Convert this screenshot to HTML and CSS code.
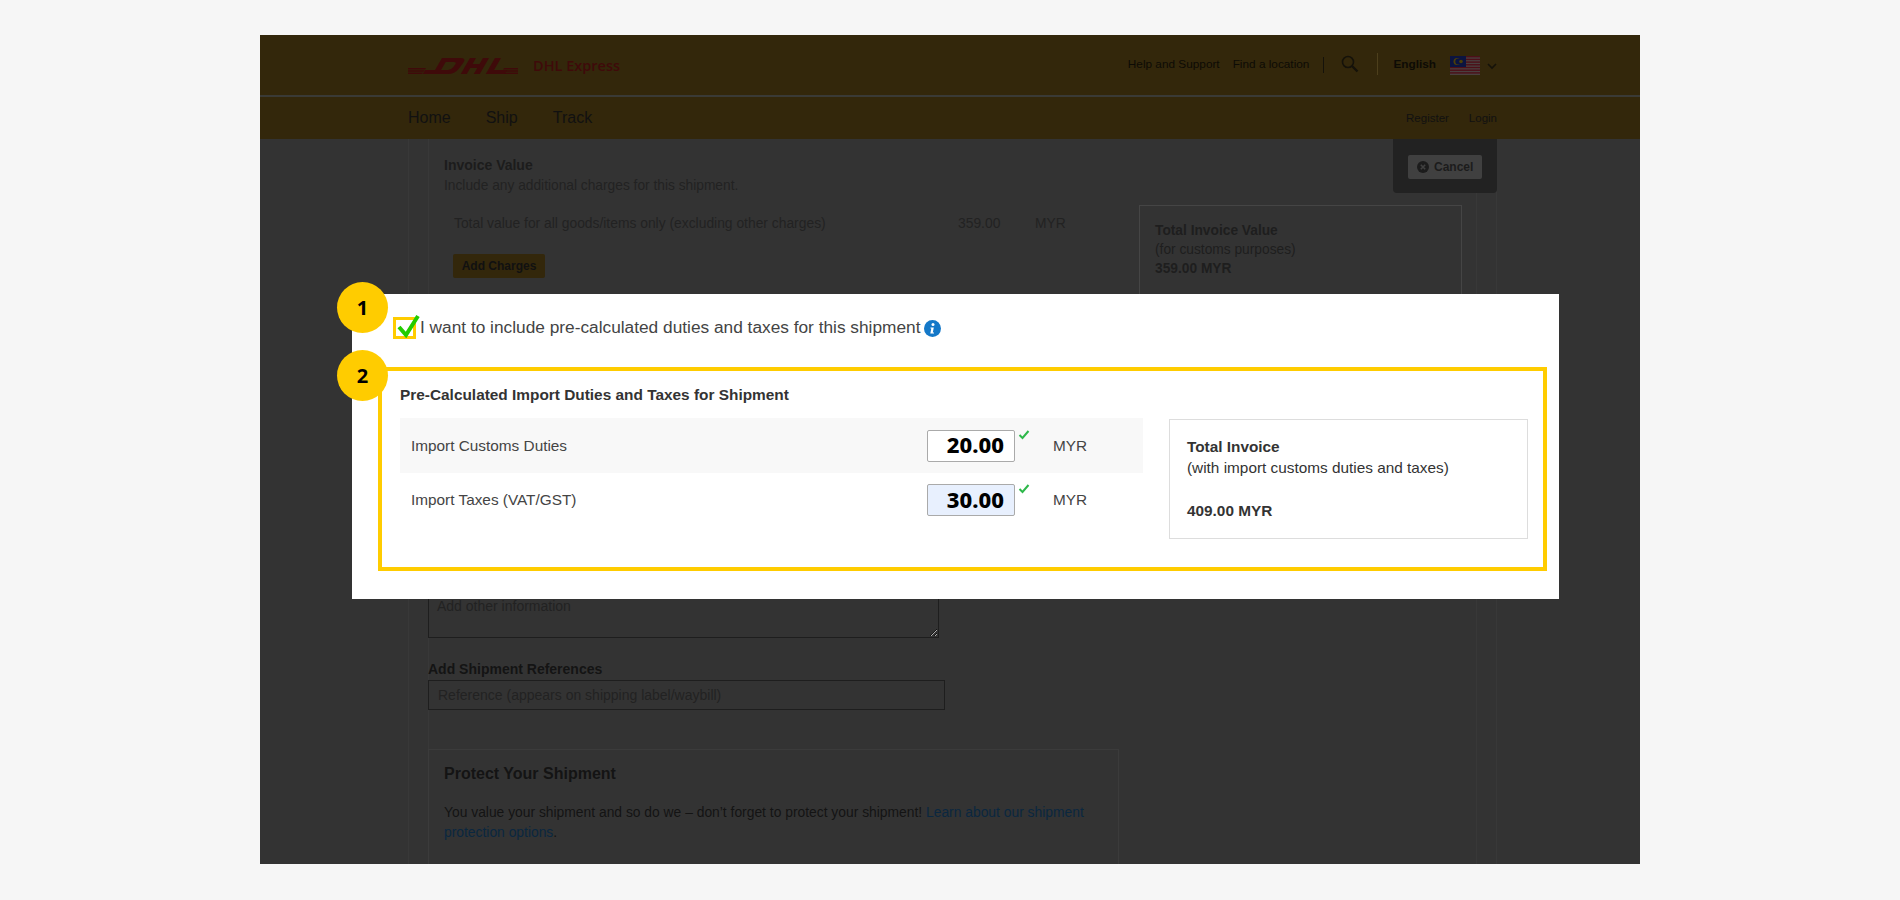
FILE: index.html
```html
<!DOCTYPE html>
<html lang="en">
<head>
<meta charset="utf-8">
<title>DHL Express - Duties and Taxes</title>
<link rel="stylesheet" href="styles.css">
</head>
<body>
<div class="frame">
  <header class="top">
    <div class="brand">
      <svg class="logo" width="110" height="18" viewBox="0 0 110 18">
        <g fill="#3f0a0a">
          <path d="M0 11H18L17 12.500H0ZM0 13.200H16.500L15.500 14.700H0ZM0 15.400H15L14 17H0Z"/>
          <path d="M96 11H110V12.500H95ZM94.500 13.200H110V14.700H93.500ZM93 15.400H110V17H92Z"/>
          <g transform="translate(0,1) skewX(-30)">
            <path fill-rule="evenodd" d="M34 0H52Q59 0 58 5L57 11Q56 16 49 16H24V12H34Z M40 4V12H47Q50 12 50.500 9L51 6Q51 4 48 4Z"/>
            <path d="M62 0H68V6H75V0H81V16H75V10H68V16H62Z"/>
            <path d="M87 0H93V12H106V16H87Z"/>
          </g>
        </g>
      </svg>
      <span class="brand-name">DHL Express</span>
    </div>
    <nav class="utility">
      <a class="util-link">Help and Support</a>
      <a class="util-link">Find a location</a>
      <span class="sep sep-a"></span>
      <svg class="search" width="18" height="18" viewBox="0 0 18 18"><circle cx="7" cy="7" r="5.500" fill="none" stroke="#15120a" stroke-width="1.600"/><path d="M11 11l5.500 5.500" stroke="#15120a" stroke-width="2.400"/></svg>
      <span class="sep sep-b"></span>
      <strong class="lang">English</strong>
      <svg class="flag" width="30" height="19" viewBox="0 0 30 19">
        <rect width="30" height="19" fill="#4a4040"/>
        <g fill="#4d0f18"><rect y="0" width="30" height="1.400"/><rect y="2.700" width="30" height="1.400"/><rect y="5.400" width="30" height="1.400"/><rect y="8.100" width="30" height="1.400"/><rect y="10.800" width="30" height="1.400"/><rect y="13.500" width="30" height="1.400"/><rect y="16.200" width="30" height="1.400"/></g>
        <rect width="16" height="11" fill="#0c1440"/>
        <circle cx="7" cy="5.500" r="3.500" fill="#4d3f08"/><circle cx="8.300" cy="5.500" r="3" fill="#0c1440"/><circle cx="11" cy="5.500" r="1.800" fill="#4d3f08"/>
      </svg>
      <svg class="chev" width="10" height="7" viewBox="0 0 10 7"><path d="M1 1l4 4 4-4" fill="none" stroke="#15120a" stroke-width="1.600"/></svg>
    </nav>
  </header>
  <div class="nav">
    <div class="nav-main"><a>Home</a><a>Ship</a><a>Track</a></div>
    <div class="nav-side"><a>Register</a><a>Login</a></div>
  </div>
  <main class="content">
    <div class="outer">
      <div class="card">
        <section class="invoice">
          <div class="invoice-left">
            <h3 class="inv-title">Invoice Value</h3>
            <p class="inv-sub">Include any additional charges for this shipment.</p>
            <div class="inv-row"><span class="inv-label">Total value for all goods/items only (excluding other charges)</span><span class="inv-val">359.00</span><span class="inv-cur">MYR</span></div>
            <button class="add">Add Charges</button>
          </div>
          <div class="inv-total"><b>Total Invoice Value</b><span>(for customs purposes)</span><b>359.00 MYR</b></div>
        </section>
        <section class="other">
          <textarea class="other-text" placeholder="Add other information"></textarea>
          <label class="ref-label">Add Shipment References</label>
          <input class="ref-input" type="text" placeholder="Reference (appears on shipping label/waybill)">
        </section>
        <section class="protect">
          <h2>Protect Your Shipment</h2>
          <p>You value your shipment and so do we – don’t forget to protect your shipment! <a>Learn about our shipment protection options</a>.</p>
        </section>
      </div>
    </div>
  </main>

  <div class="cancel-tab"><button class="cancel"><svg width="12" height="12" viewBox="0 0 12 12"><circle cx="6" cy="6" r="6" fill="#1c1c1c"/><path d="M3.800 3.800l4.400 4.400M8.200 3.800l-4.400 4.400" stroke="#404040" stroke-width="1.600"/></svg>Cancel</button></div>

  <section class="panel">
    <div class="consent">
      <span class="checkbox"><svg class="tick" width="24" height="24" viewBox="0 0 24 24"><path d="M3 13l7 8L22 2" fill="none" stroke="#22cc00" stroke-width="4"/></svg></span>
      <span class="consent-text">I want to include pre-calculated duties and taxes for this shipment</span>
      <svg class="info" width="17" height="17" viewBox="0 0 17 17"><circle cx="8.500" cy="8.500" r="8.500" fill="#1478c8"/><circle cx="9" cy="4.500" r="1.500" fill="#fff"/><path d="M6.500 7.500h3.300l-1 5h1.200v1H6.300l1-5H6.500z" fill="#fff"/></svg>
    </div>
    <div class="highlight">
      <h3 class="duty-title">Pre-Calculated Import Duties and Taxes for Shipment</h3>
      <div class="duty-grid">
        <div class="duty-rows">
          <div class="duty-row shaded">
            <span class="duty-label">Import Customs Duties</span>
            <input class="amount" type="text" value="20.00">
            <svg class="ok" width="12" height="10" viewBox="0 0 12 10"><path d="M1.500 5l3 3 6-7" fill="none" stroke="#2eb84a" stroke-width="2"/></svg>
            <span class="cur">MYR</span>
          </div>
          <div class="duty-row">
            <span class="duty-label">Import Taxes (VAT/GST)</span>
            <input class="amount filled" type="text" value="30.00">
            <svg class="ok" width="12" height="10" viewBox="0 0 12 10"><path d="M1.500 5l3 3 6-7" fill="none" stroke="#2eb84a" stroke-width="2"/></svg>
            <span class="cur">MYR</span>
          </div>
        </div>
        <aside class="total">
          <b>Total Invoice</b>
          <span>(with import customs duties and taxes)</span>
          <b class="total-sum">409.00 MYR</b>
        </aside>
      </div>
    </div>
  </section>
  <span class="badge badge-one">1</span>
  <span class="badge badge-two">2</span>
</div>
</body>
</html>
```
FILE: styles.css
```css
* { box-sizing: border-box; }
html, body { margin: 0; height: 100%; overflow: hidden; }
body { background: #f6f6f6; padding-top: 35px; font-family: "Liberation Sans", Arial, sans-serif; color: #222; }
.frame { position: relative; width: 1380px; height: 829px; margin: 0 auto 0 260px; overflow: hidden; background: #333; }

.top { height: 60px; background: #33270b; display: flex; justify-content: space-between; align-items: center; padding: 0 143px 0 148px; }
.brand { display: flex; align-items: center; gap: 15px; margin-top: 1px; }
.logo { display: block; }
.brand-name { font-family: "Open Sans", sans-serif; font-weight: 600; font-size: 14.5px; color: #3f0a0a; white-space: nowrap; }
.utility { display: flex; align-items: center; font-size: 11.8px; color: #0d0b05; margin-top: -3px; }
.util-link { margin-right: 13px; }
.util-link + .util-link { margin-right: 14px; }
.sep { width: 1px; height: 16px; background: #15120a; }
.sep-a { margin: 2px 17px 0 0; }
.search { margin-right: 18px; }
.sep-b { height: 22px; background: #4d3f1c; margin-right: 15px; }
.lang { margin-right: 14px; font-size: 11.8px; }
.flag { margin-right: 7px; margin-top: 4px; }
.chev { margin-top: 6px; }

.nav { height: 44px; background: #33270b; border-top: 2px solid #3a3a36; display: flex; justify-content: space-between; align-items: center; padding: 0 143px 0 148px; color: #111; }
.nav-main { display: flex; gap: 35px; font-size: 16px; }
.nav-side { display: flex; gap: 20px; font-size: 11.5px; }

.content { height: 725px; background: #333; padding: 0 143px 0 148px; overflow: hidden; }
.outer { height: 100%; padding: 0 19px; border-left: 1px solid #383838; border-right: 1px solid #383838; }
.card { height: 100%; box-shadow: inset 1px 0 #383838, inset -1px 0 #383838; padding: 17px 0 0 0; }

.invoice { display: flex; height: 380px; padding-left: 16px; }
.invoice-left { width: 695px; }
.inv-title { margin: 0; font-size: 14px; line-height: 19px; color: #1c1c1c; }
.inv-sub { margin: 0 0 13px; font-size: 13.75px; line-height: 19px; color: #222; position: relative; top: 1px; }
.inv-row { display: flex; align-items: center; height: 32px; padding-left: 10px; font-size: 13.85px; color: #222; }
.inv-label { width: 504px; }
.inv-val { width: 77px; }
.inv-cur { width: 40px; }
.add { display: block; margin: 15px 0 0 9px; width: 92px; height: 24px; border: 0; border-radius: 2px; background: #33270b; font: bold 12px "Liberation Sans", Arial, sans-serif; color: #111; padding: 0; }
.inv-total { width: 323px; height: 200px; margin: 49px 0 0 0; border: 1px solid #454545; padding: 15px 15px; display: flex; flex-direction: column; font-size: 13.75px; line-height: 19px; color: #1e1e1e; }

.other { display: flex; flex-direction: column; align-items: flex-start; }
.other-text { width: 511px; height: 41px; margin-top: 61px; background: transparent; border: 1px solid #1e1e1e; border-top: 0; padding: 1px 8px; font: 14px "Liberation Sans", Arial, sans-serif; outline: 0; }
.other-text::placeholder, .ref-input::placeholder { color: #222; }
.ref-label { margin: 23px 0 2px; font-weight: bold; font-size: 14px; line-height: 17px; color: #141414; }
.ref-input { width: 517px; height: 30px; background: transparent; border: 1px solid #1e1e1e; padding: 0 9px; font: 14px "Liberation Sans", Arial, sans-serif; outline: 0; }

.protect { width: 691px; height: 200px; margin-top: 39px; border: 1px solid #3b3b3b; padding: 14px 15px; color: #141414; }
.protect h2 { margin: 0 0 19px; font-size: 16px; line-height: 20px; color: #141414; }
.protect p { margin: 0; font-size: 13.85px; line-height: 19.500px; }
.protect a { color: #0a2740; }

.cancel-tab { position: absolute; left: 1133px; top: 104px; width: 104px; height: 54px; background: #222; border-radius: 0 0 4px 4px; padding: 16px 0 0 15px; }
.cancel { display: flex; align-items: center; gap: 5px; width: 74px; height: 24px; padding: 0 0 0 9px; border: 0; border-radius: 2px; background: #404040; font: bold 12px "Liberation Sans", Arial, sans-serif; color: #1c1c1c; }

.panel { position: absolute; left: 92px; top: 259px; width: 1207px; height: 305px; background: #fff; padding: 23px 0 0 26px; }
.consent { display: flex; align-items: center; height: 22px; font-size: 17.3px; color: #444; margin-left: 15px; }
.checkbox { position: relative; width: 23px; height: 22px; border: 3px solid #ffcc00; flex: none; background: #fff; margin-right: 4px; }
.tick { position: absolute; left: 0; top: -6px; }
.consent-text { margin: -2px 4px 0 0; white-space: nowrap; }
.highlight { width: 1169px; height: 204px; margin-top: 28px; border: 4px solid #ffcc00; padding: 14px 15px 0 18px; }
.duty-title { margin: 0 0 13px; font-size: 15.4px; line-height: 20px; color: #333; white-space: nowrap; }
.duty-grid { display: flex; justify-content: space-between; align-items: flex-start; }
.duty-rows { width: 743px; }
.duty-row { display: flex; align-items: center; height: 54px; padding: 0 54px 0 11px; font-size: 15.35px; color: #444; }
.duty-row.shaded { height: 55px; background: #f8f8f8; }
.duty-label { flex: 1; }
.amount { width: 88px; height: 32px; padding: 0 10px 3px 0; border: 1px solid #aaa; border-radius: 2px; background: #fff; text-align: right; font: 800 22px "Noto Sans", sans-serif; color: #000; outline: 0; }
.amount.filled { background: #e8f0fe; }
.ok { margin: 0 23px 0 3px; position: relative; top: -11px; flex: none; }
.cur { width: 36px; }
.total { width: 359px; height: 120px; margin-top: 1px; border: 1px solid #ddd; padding: 16px 17px; display: flex; flex-direction: column; font-size: 15.35px; line-height: 21px; color: #333; }
.total-sum { margin-top: 22px; }

.badge { position: absolute; left: 77px; width: 51px; height: 51px; border-radius: 50%; background: #ffcc00; color: #000; display: flex; align-items: center; justify-content: center; font: bold 20px "Noto Sans", sans-serif; }
.badge-one { top: 247px; }
.badge-two { top: 315px; }
```
